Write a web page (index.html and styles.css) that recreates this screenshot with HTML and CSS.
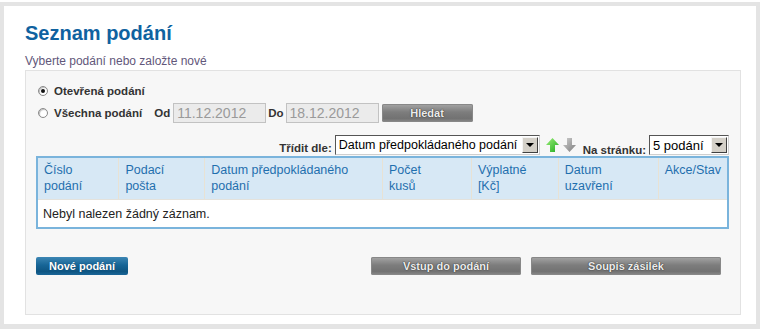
FILE: index.html
```html
<!DOCTYPE html>
<html lang="cs">
<head>
    <meta charset="UTF-8">
    <title>Seznam podání</title>
    <link rel="stylesheet" href="styles.css">
</head>
<body>
    <div class="frame">
        <h1 class="title">Seznam podání</h1>
        <p class="subtitle">Vyberte podání nebo založte nové</p>

        <div class="panel">
            <div class="filter-row">
                <span class="radio checked"></span>
                <span class="label">Otevřená podání</span>
            </div>
            <div class="filter-row">
                <span class="radio"></span>
                <span class="label">Všechna podání</span>
                <span class="label date-label">Od</span>
                <span class="date-input">11.12.2012</span>
                <span class="label date-label">Do</span>
                <span class="date-input">18.12.2012</span>
                <button class="btn btn-gray btn-search">Hledat</button>
            </div>

            <div class="sort-row">
                <span class="label">Třídit dle:</span>
                <div class="select select-sort">
                    <span>Datum předpokládaného podání</span>
                    <span class="select-arrow"></span>
                </div>
                <svg class="arrow" width="15" height="16" viewBox="0 0 15 16">
                    <defs>
                        <linearGradient id="green" x1="0" y1="0" x2="1" y2="1">
                            <stop offset="0" stop-color="#9ef07a"/>
                            <stop offset="1" stop-color="#1faa1f"/>
                        </linearGradient>
                    </defs>
                    <polygon points="7.5,1 14,8 10,8 10,15 5,15 5,8 1,8" fill="url(#green)"/>
                </svg>
                <svg class="arrow" width="15" height="16" viewBox="0 0 15 16">
                    <defs>
                        <linearGradient id="grey" x1="0" y1="0" x2="1" y2="1">
                            <stop offset="0" stop-color="#d0d0d0"/>
                            <stop offset="1" stop-color="#7c7c7c"/>
                        </linearGradient>
                    </defs>
                    <polygon points="5,1 10,1 10,8 14,8 7.5,15 1,8 5,8" fill="url(#grey)"/>
                </svg>
                <span class="label per-page">Na stránku:</span>
                <div class="select select-page">
                    <span>5 podání</span>
                    <span class="select-arrow"></span>
                </div>
            </div>

            <table class="list">
                <thead>
                    <tr>
                        <th class="c1">Číslo<br>podání</th>
                        <th class="c2">Podací<br>pošta</th>
                        <th class="c3">Datum předpokládaného<br>podání</th>
                        <th class="c4">Počet<br>kusů</th>
                        <th class="c5">Výplatné<br>[Kč]</th>
                        <th class="c6">Datum<br>uzavření</th>
                        <th class="c7">Akce/Stav</th>
                    </tr>
                </thead>
                <tbody>
                    <tr>
                        <td colspan="7">Nebyl nalezen žádný záznam.</td>
                    </tr>
                </tbody>
            </table>

            <div class="actions">
                <button class="btn btn-blue">Nové podání</button>
                <button class="btn btn-gray btn-enter">Vstup do podání</button>
                <button class="btn btn-gray btn-list">Soupis zásilek</button>
            </div>
        </div>
    </div>
</body>
</html>
```

FILE: styles.css
```css
body {
    margin: 0;
    padding-top: 2px;
    background-color: #ffffff;
    font-family: "Liberation Sans", Arial, sans-serif;
}
.frame {
    border: 4px solid #e4e4e4;
    border-bottom-width: 5px;
    height: 303px;
    padding: 15px 15px 0 21px;
}
.title {
    margin: 0;
    font-size: 20px;
    line-height: 24px;
    font-weight: bold;
    color: #0f62a0;
}
.subtitle {
    margin: 10px 0 2px;
    font-size: 12px;
    line-height: 13px;
    color: #62577a;
}
.panel {
    width: 693px;
    height: 233px;
    padding: 10px 11px 0 10px;
    background-color: #f7f7f7;
    border: 1px solid #e2e2e2;
}
.label {
    font-size: 11.5px;
    font-weight: bold;
    color: #333333;
    white-space: nowrap;
}
.filter-row {
    display: flex;
    align-items: center;
    height: 20px;
    padding-left: 2px;
}
.filter-row + .filter-row {
    margin-top: 2px;
}
.radio {
    width: 8px;
    height: 8px;
    margin-right: 6px;
    border: 1px solid #8a8a8a;
    border-radius: 50%;
    background-color: #ffffff;
    box-shadow: inset 1px 1px 1px #bcbcbc;
    display: flex;
    align-items: center;
    justify-content: center;
}
.radio.checked::after {
    content: "";
    width: 4px;
    height: 4px;
    border-radius: 50%;
    background-color: #111111;
}
.date-label {
    margin: 0 3px 0 12px;
}
.date-label + .date-input + .date-label {
    margin-left: 2px;
    margin-right: 2px;
}
.date-input {
    box-sizing: border-box;
    width: 93px;
    height: 20px;
    padding-left: 3px;
    border: 1px solid #c2c2c2;
    background-color: #ebebeb;
    color: #9a9a9a;
    font-size: 14px;
    line-height: 18px;
}
.btn {
    height: 18px;
    padding: 0;
    border: none;
    border-radius: 2px;
    font-family: "Liberation Sans", Arial, sans-serif;
    font-size: 11px;
    font-weight: bold;
    cursor: pointer;
}
.btn-gray {
    color: #ececec;
    text-shadow: 0 0 1px #333333, 0 0 1px #333333;
    background: linear-gradient(#a6a6a6, #7d7d7d 45%, #727272 80%, #8a8a8a);
    box-shadow: inset 0 0 0 1px #888888;
}
.btn-blue {
    width: 92px;
    color: #ffffff;
    text-shadow: 0 0 1px #0a3a5c;
    background: linear-gradient(#3c86b4, #176596 45%, #0e5582 80%, #1a6698);
}
.btn-search {
    width: 91px;
    margin-left: 3px;
}
.sort-row {
    display: flex;
    align-items: center;
    justify-content: flex-end;
    margin-top: 12px;
    height: 20px;
}
.sort-row .label {
    align-self: flex-end;
    line-height: 14px;
    margin-right: 3px;
}
.sort-row .per-page {
    margin-bottom: -2px;
    margin-left: 4px;
}
.select {
    box-sizing: border-box;
    height: 20px;
    display: flex;
    align-items: center;
    justify-content: space-between;
    padding: 0 1px 0 3px;
    background-color: #ffffff;
    border: 1px solid;
    border-color: #555555 #cfcfcf #cfcfcf #555555;
    font-size: 13px;
    color: #000000;
    white-space: nowrap;
    overflow: hidden;
}
.select-sort {
    width: 205px;
    margin-right: 5px;
    font-size: 12.5px;
}
.select-page {
    width: 80px;
}
.select-arrow {
    box-sizing: border-box;
    flex: none;
    width: 16px;
    height: 16px;
    background-color: #d4d0c8;
    border: 1px solid;
    border-color: #f4f4f4 #404040 #404040 #f4f4f4;
    display: flex;
    align-items: center;
    justify-content: center;
}
.select-arrow::after {
    content: "";
    border-left: 4px solid transparent;
    border-right: 4px solid transparent;
    border-top: 4px solid #000000;
}
.arrow {
    display: block;
    margin-right: 2px;
}
.list {
    width: 693px;
    margin-top: 1px;
    border-collapse: collapse;
    border: 2px solid #7ab4dc;
    background-color: #ffffff;
    font-size: 12.5px;
}
.list th {
    height: 42px;
    box-sizing: border-box;
    padding: 4px 6px 5px;
    vertical-align: top;
    text-align: left;
    font-weight: normal;
    line-height: 16px;
    color: #1f6fae;
    background-color: #d7e8f5;
    border-left: 1px solid #e8e2d4;
    border-bottom: 1px solid #e4e2dc;
}
.list th.c1 { width: 82px; border-left: none; }
.list th.c2 { width: 86px; }
.list th.c3 { width: 178px; }
.list th.c4 { width: 89px; }
.list th.c5 { width: 87px; }
.list th.c6 { width: 100px; }
.list td {
    height: 27px;
    padding: 0 5px;
    background-color: #ffffff;
    color: #222222;
}
.actions {
    display: flex;
    align-items: center;
    margin-top: 28px;
    padding-right: 8px;
}
.btn-enter {
    width: 150px;
    margin-left: auto;
}
.btn-list {
    width: 190px;
    margin-left: 10px;
}
```
